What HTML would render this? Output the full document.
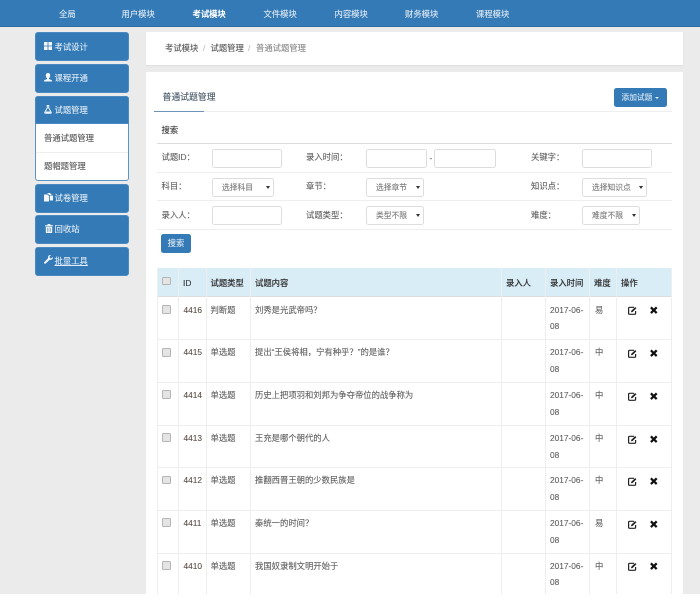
<!DOCTYPE html>
<html><head><meta charset="utf-8">
<style>
html,body{margin:0;padding:0;background:#fff;width:700px;height:599px;overflow:hidden}
#w{position:absolute;left:0;top:0;width:700px;height:594px;background:#ebebeb;overflow:hidden;font-family:"Liberation Sans","Noto Sans CJK SC",sans-serif;font-size:8.33px;color:#5f5f5f;filter:blur(.25px);-webkit-text-stroke:.1px}
#w div{position:absolute;white-space:nowrap;box-sizing:border-box}
.t{line-height:12px;height:12px}
.n{color:#dfe9f3;top:7.5px}
.s{left:35px;width:94px;background:#337ab7;border:1px solid #4a8ac2;border-radius:3px}
.st{color:#e2ecf5;left:54.5px;line-height:12px}
svg{position:absolute;display:block}
.inp{background:#fff;border:1px solid #ddd;border-radius:2.5px}
.sel{background:#fff;border:1px solid #ddd;border-radius:2.5px;color:#777;font-size:7.75px;line-height:18px;padding-left:9px}
.sel:after{content:"";position:absolute;right:3.5px;top:7.5px;border-left:2px solid transparent;border-right:2px solid transparent;border-top:3px solid #333}
.hl{left:157px;width:515px;height:1px;background:#eee}
.vl{width:1px;background:#eee}
.cb{left:162px;width:8.5px;height:8.5px;background:#e4e4e4;border:1px solid #b5b5b5;border-radius:1.5px}
.h{color:#333;top:277px;line-height:12px;font-weight:500}
</style></head><body>
<div id="w">
<div style="left:0;top:0;width:700px;height:27px;background:#337ab7;border-bottom:1px solid #2c6a9f"></div>
<div class="t n" style="left:59px">全局</div>
<div class="t n" style="left:121.5px">用户模块</div>
<div class="t n" style="left:192.5px;color:#fff;font-weight:700">考试模块</div>
<div class="t n" style="left:263.5px">文件模块</div>
<div class="t n" style="left:334.5px">内容模块</div>
<div class="t n" style="left:405px">财务模块</div>
<div class="t n" style="left:476px">课程模块</div>

<div class="s" style="top:32px;height:29px"></div>
<div class="s" style="top:64px;height:29px"></div>
<div style="left:35px;top:96px;width:94px;height:85px;background:#fff;border:1px solid #5b94c6;border-radius:3px"></div>
<div class="s" style="top:96px;height:28px;border-radius:3px 3px 0 0"></div>
<div style="left:36px;top:152px;width:92px;height:1px;background:#eee"></div>
<div class="s" style="top:184px;height:29px"></div>
<div class="s" style="top:215px;height:29px"></div>
<div class="s" style="top:247px;height:29px"></div>

<svg style="left:44px;top:42px" width="8" height="8" viewBox="0 0 8 8"><path fill="#f2f6fa" d="M0 0h3.6v3.6H0zM4.4 0H8v3.6H4.4zM0 4.4h3.6V8H0zM4.4 4.4H8V8H4.4z"/></svg>
<div class="st" style="top:40.5px">考试设计</div>
<svg style="left:44px;top:73px" width="8" height="9" viewBox="0 0 8 9"><path fill="#f2f6fa" d="M4 0C5.5 0 6.2 1 6.2 2.4 6.2 3.8 5.5 5 5 5.4V6L8 7.4V8.5H0V7.4L3 6V5.4C2.5 5 1.8 3.8 1.8 2.4 1.8 1 2.5 0 4 0z"/></svg>
<div class="st" style="top:72px">课程开通</div>
<svg style="left:44px;top:105px" width="8" height="9" viewBox="0 0 8 9"><path fill="none" stroke="#f2f6fa" stroke-width="1" d="M2.7.5h2.6M3.3.5v2.4L.8 7.4c-.2.4 0 .8.4.8h5.6c.4 0 .6-.4.4-.8L4.7 2.9V.5"/><path fill="#f2f6fa" d="M2 6.5h4l1 2H1z"/></svg>
<div class="st" style="top:103.5px">试题管理</div>
<div class="t" style="left:44px;top:132px;color:#555">普通试题管理</div>
<div class="t" style="left:44px;top:160px;color:#555">题帽题管理</div>
<svg style="left:44px;top:193px" width="9" height="9" viewBox="0 0 9 9"><path fill="#f2f6fa" d="M0 1.5h3.6L5 3v5.5H0zM3.4 0H6l1.5 1.5V2H5.2L3.4.4zM5.8 2.5H9v5H5.8z"/></svg>
<div class="st" style="top:191.5px">试卷管理</div>
<svg style="left:44.5px;top:224px" width="8" height="9" viewBox="0 0 8 9"><path fill="#f2f6fa" d="M0 1.2h2.5V.4C2.5.1 2.7 0 3 0h2c.3 0 .5.1.5.4v.8H8V2.2H0zM.8 2.8h6.4V8.2c0 .5-.3.8-.7.8h-5c-.4 0-.7-.3-.7-.8z"/><path stroke="#337ab7" stroke-width=".5" d="M2.500 3.800v4M4 3.800v4M5.500 3.800v4"/></svg>
<div class="st" style="top:223px">回收站</div>
<svg style="left:44px;top:255px" width="9" height="9" viewBox="0 0 9 9"><path fill="#f2f6fa" d="M8.900 2 7.200 3.400 5.800 3 5.400 1.700 6.900.1C5.600-.2 4.200.5 4 2c0 .4 0 .8.1 1.100L.3 7.100c-.4.4-.4 1 0 1.400.4.4 1 .4 1.400 0L5.700 4.700c1.600.5 3.600-.7 3.200-2.700z"/></svg>
<div class="st" style="top:254.5px;text-decoration:underline">批量工具</div>

<div style="left:146px;top:32px;width:537px;height:33px;background:#fff;box-shadow:0 1px 1px #ddd"></div>
<div class="t" style="left:165px;top:42px;color:#555">考试模块</div>
<div class="t" style="left:203px;top:42px;color:#bbb">/</div>
<div class="t" style="left:210.5px;top:42px;color:#555">试题管理</div>
<div class="t" style="left:248px;top:42px;color:#bbb">/</div>
<div class="t" style="left:256px;top:42px;color:#888">普通试题管理</div>

<div style="left:146px;top:72px;width:537px;height:522px;background:#fff"></div>
<div class="t" style="left:162.5px;top:91px;font-size:8.85px;color:#456">普通试题管理</div>
<div style="left:154px;top:111px;width:518px;height:1px;background:#eee"></div>
<div style="left:154px;top:111px;width:50px;height:1px;background:#6d94b8"></div>
<div style="left:614px;top:88px;width:53px;height:19px;background:#337ab7;border-radius:2.5px"></div>
<div class="t" style="left:621.5px;top:91.5px;color:#dce8f2;font-size:7.7px">添加试题</div>
<div style="left:655px;top:97px;width:0;height:0;border-left:2px solid transparent;border-right:2px solid transparent;border-top:2px solid #e8f0f6"></div>

<div class="t" style="left:161.5px;top:124px;color:#333">搜索</div>
<div class="hl" style="top:143px;height:1.4px;background:#ddd"></div>
<div class="hl" style="top:172px"></div>
<div class="hl" style="top:200px"></div>
<div class="hl" style="top:229px"></div>

<div class="t" style="left:161.5px;top:151px">试题ID：</div>
<div class="t" style="left:306px;top:151px">录入时间：</div>
<div class="t" style="left:531px;top:151px">关键字：</div>
<div class="t" style="left:161.5px;top:180px">科目：</div>
<div class="t" style="left:306px;top:180px">章节：</div>
<div class="t" style="left:531px;top:180px">知识点：</div>
<div class="t" style="left:161.5px;top:208.5px">录入人：</div>
<div class="t" style="left:306px;top:208.5px">试题类型：</div>
<div class="t" style="left:531px;top:208.5px">难度：</div>

<div class="inp" style="left:212px;top:148.5px;width:70px;height:19px"></div>
<div class="inp" style="left:366px;top:149px;width:61px;height:19px"></div>
<div class="t" style="left:429.5px;top:151.5px">-</div>
<div class="inp" style="left:434px;top:149px;width:61.500px;height:19px"></div>
<div class="inp" style="left:582px;top:148.5px;width:70px;height:19px"></div>
<div class="sel" style="left:212px;top:177.5px;width:62px;height:19px">选择科目</div>
<div class="sel" style="left:366px;top:177.5px;width:58px;height:19px">选择章节</div>
<div class="sel" style="left:582px;top:177.5px;width:65px;height:19px">选择知识点</div>
<div class="inp" style="left:212px;top:205.5px;width:70px;height:19px"></div>
<div class="sel" style="left:366px;top:205.5px;width:58px;height:19px">类型不限</div>
<div class="sel" style="left:582px;top:205.5px;width:58px;height:19px">难度不限</div>
<div style="left:161px;top:234px;width:30px;height:19px;background:#337ab7;border-radius:2.5px;color:#dce8f2;text-align:center;line-height:18.5px">搜索</div>

<div style="left:157px;top:268px;width:515px;height:28.5px;background:#d9edf7;border-bottom:1px solid #ddd"></div>
<div class="vl" style="left:157px;top:268px;height:326px"></div>
<div class="vl" style="left:178px;top:268px;height:326px"></div>
<div class="vl" style="left:206px;top:268px;height:326px"></div>
<div class="vl" style="left:250px;top:268px;height:326px"></div>
<div class="vl" style="left:501px;top:268px;height:326px"></div>
<div class="vl" style="left:545px;top:268px;height:326px"></div>
<div class="vl" style="left:589px;top:268px;height:326px"></div>
<div class="vl" style="left:616px;top:268px;height:326px"></div>
<div class="vl" style="left:671px;top:268px;height:326px"></div>

<div class="cb" style="top:276.5px"></div>
<div class="h" style="left:183px">ID</div>
<div class="h" style="left:210.5px">试题类型</div>
<div class="h" style="left:255px">试题内容</div>
<div class="h" style="left:506px">录入人</div>
<div class="h" style="left:550px">录入时间</div>
<div class="h" style="left:594px">难度</div>
<div class="h" style="left:621px">操作</div>

<svg width="0" height="0" style="position:absolute"><defs>
<g id="e"><path fill="none" stroke="#222" stroke-width="1.2" d="M6 1.300H1.600C1 1.300.6 1.700.6 2.300v5c0 .6.4 1 1 1h5c.6 0 1-.4 1-1V5"/><path fill="#222" d="M7.200 1 8.400 2.200 4.600 6 3 6.300 3.300 4.800z"/></g>
<path id="x" fill="#111" d="M1.700.5 3.800 2.600 5.900.5 7.500 2.100 5.400 4.200 7.500 6.300 5.900 7.900 3.800 5.800 1.700 7.900.1 6.300 2.200 4.200.1 2.100z"/>
</defs></svg>

<div class="hl" style="top:339px"></div>
<div class="cb" style="top:305px"></div><div class="t" style="left:183.5px;top:303.5px;color:#5c4f48">4416</div><div class="t" style="left:210.5px;top:303.5px">判断题</div><div class="t" style="left:255px;top:303.5px">刘秀是光武帝吗？</div><div class="t" style="left:550px;top:303.5px">2017-06-</div><div class="t" style="left:550px;top:320px">08</div><div class="t" style="left:595px;top:303.5px">易</div>
<svg style="left:628px;top:306px" width="9" height="9"><use href="#e"/></svg><svg style="left:650px;top:306px" width="8" height="8.5"><use href="#x"/></svg>

<div class="hl" style="top:382px"></div>
<div class="cb" style="top:348px"></div><div class="t" style="left:183.5px;top:346px;color:#5c4f48">4415</div><div class="t" style="left:210.5px;top:346px">单选题</div><div class="t" style="left:255px;top:346px">提出“王侯将相，宁有种乎？”的是谁？</div><div class="t" style="left:550px;top:346px">2017-06-</div><div class="t" style="left:550px;top:363px">08</div><div class="t" style="left:595px;top:346px">中</div>
<svg style="left:628px;top:349px" width="9" height="9"><use href="#e"/></svg><svg style="left:650px;top:349px" width="8" height="8.5"><use href="#x"/></svg>

<div class="hl" style="top:424.5px;height:1.4px"></div>
<div class="cb" style="top:390px"></div><div class="t" style="left:183.5px;top:389px;color:#5c4f48">4414</div><div class="t" style="left:210.5px;top:389px">单选题</div><div class="t" style="left:255px;top:389px">历史上把项羽和刘邦为争夺帝位的战争称为</div><div class="t" style="left:550px;top:389px">2017-06-</div><div class="t" style="left:550px;top:405.5px">08</div><div class="t" style="left:595px;top:389px">中</div>
<svg style="left:628px;top:391.5px" width="9" height="9"><use href="#e"/></svg><svg style="left:650px;top:391.5px" width="8" height="8.5"><use href="#x"/></svg>

<div class="hl" style="top:467px"></div>
<div class="cb" style="top:433px"></div><div class="t" style="left:183.5px;top:431.5px;color:#5c4f48">4413</div><div class="t" style="left:210.5px;top:431.5px">单选题</div><div class="t" style="left:255px;top:431.5px">王充是哪个朝代的人</div><div class="t" style="left:550px;top:431.5px">2017-06-</div><div class="t" style="left:550px;top:448.5px">08</div><div class="t" style="left:595px;top:431.5px">中</div>
<svg style="left:628px;top:434.5px" width="9" height="9"><use href="#e"/></svg><svg style="left:650px;top:434.5px" width="8" height="8.5"><use href="#x"/></svg>

<div class="hl" style="top:509.5px;height:1.6px"></div>
<div class="cb" style="top:475.5px"></div><div class="t" style="left:183.5px;top:474px;color:#5c4f48">4412</div><div class="t" style="left:210.5px;top:474px">单选题</div><div class="t" style="left:255px;top:474px">推翻西晋王朝的少数民族是</div><div class="t" style="left:550px;top:474px">2017-06-</div><div class="t" style="left:550px;top:491px">08</div><div class="t" style="left:595px;top:474px">中</div>
<svg style="left:628px;top:477px" width="9" height="9"><use href="#e"/></svg><svg style="left:650px;top:477px" width="8" height="8.5"><use href="#x"/></svg>

<div class="hl" style="top:552.5px"></div>
<div class="cb" style="top:518px"></div><div class="t" style="left:183.5px;top:517px;color:#5c4f48">4411</div><div class="t" style="left:210.5px;top:517px">单选题</div><div class="t" style="left:255px;top:517px">秦统一的时间？</div><div class="t" style="left:550px;top:517px">2017-06-</div><div class="t" style="left:550px;top:533.5px">08</div><div class="t" style="left:595px;top:517px">易</div>
<svg style="left:628px;top:519.5px" width="9" height="9"><use href="#e"/></svg><svg style="left:650px;top:519.5px" width="8" height="8.5"><use href="#x"/></svg>

<div class="cb" style="top:561px"></div><div class="t" style="left:183.5px;top:559.5px;color:#5c4f48">4410</div><div class="t" style="left:210.5px;top:559.5px">单选题</div><div class="t" style="left:255px;top:559.5px">我国奴隶制文明开始于</div><div class="t" style="left:550px;top:559.5px">2017-06-</div><div class="t" style="left:550px;top:576px">08</div><div class="t" style="left:595px;top:559.5px">中</div>
<svg style="left:628px;top:562px" width="9" height="9"><use href="#e"/></svg><svg style="left:650px;top:562px" width="8" height="8.5"><use href="#x"/></svg>
</div>
</body></html>
